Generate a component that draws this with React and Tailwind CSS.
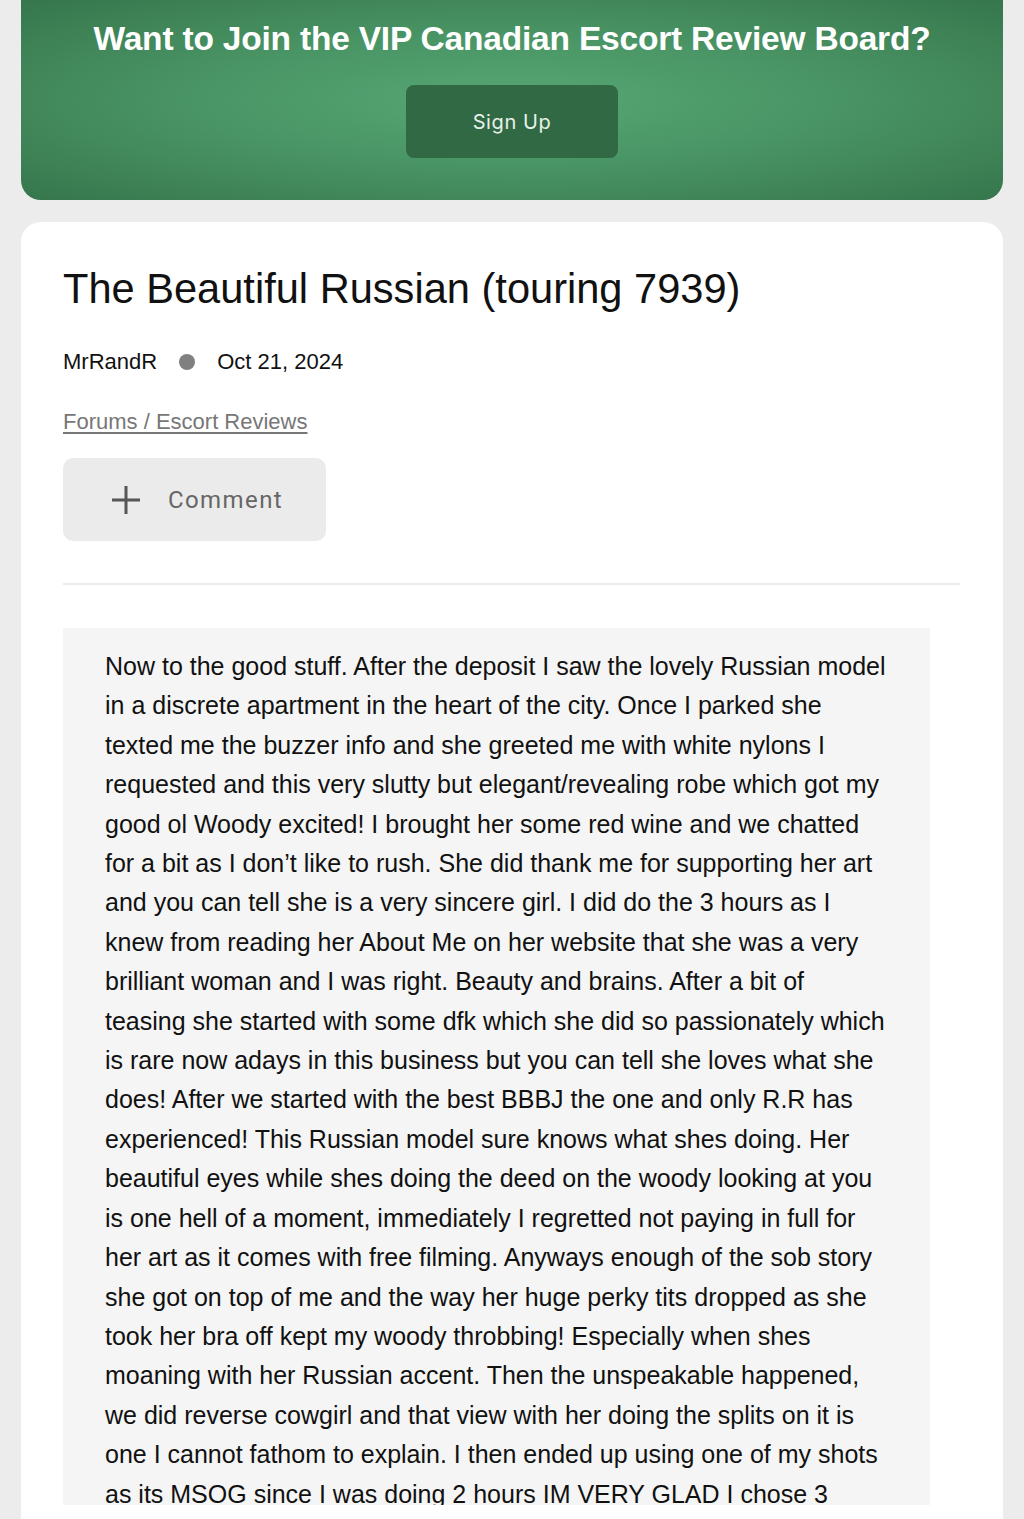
import React from 'react';

const lines = [
    "Now to the good stuff. After the deposit I saw the lovely Russian model",
    "in a discrete apartment in the heart of the city. Once I parked she",
    "texted me the buzzer info and she greeted me with white nylons I",
    "requested and this very slutty but elegant/revealing robe which got my",
    "good ol Woody excited! I brought her some red wine and we chatted",
    "for a bit as I don\u2019t like to rush. She did thank me for supporting her art",
    "and you can tell she is a very sincere girl. I did do the 3 hours as I",
    "knew from reading her About Me on her website that she was a very",
    "brilliant woman and I was right. Beauty and brains. After a bit of",
    "teasing she started with some dfk which she did so passionately which",
    "is rare now adays in this business but you can tell she loves what she",
    "does! After we started with the best BBBJ the one and only R.R has",
    "experienced! This Russian model sure knows what shes doing. Her",
    "beautiful eyes while shes doing the deed on the woody looking at you",
    "is one hell of a moment, immediately I regretted not paying in full for",
    "her art as it comes with free filming. Anyways enough of the sob story",
    "she got on top of me and the way her huge perky tits dropped as she",
    "took her bra off kept my woody throbbing! Especially when shes",
    "moaning with her Russian accent. Then the unspeakable happened,",
    "we did reverse cowgirl and that view with her doing the splits on it is",
    "one I cannot fathom to explain. I then ended up using one of my shots",
    "as its MSOG since I was doing 2 hours IM VERY GLAD I chose 3",
    "hours!",
];

const App = () => {
    return (
        <div className="h-[1519px] overflow-hidden bg-[#ececec] px-[21px] font-['Liberation_Sans',Arial,sans-serif]">
            <div className="h-[200px] rounded-b-[20px] bg-[radial-gradient(ellipse_at_center,#56a774_0%,#4a9565_45%,#36764c_100%)] flex flex-col items-center pt-[19px]">
                <h1 className="text-[33.5px] font-bold text-white leading-[40px] tracking-[-0.2px]">
                    Want to Join the VIP Canadian Escort Review Board?
                </h1>
                <button className="mt-[26px] w-[212px] h-[73px] rounded-[8px] bg-[#316945] text-[#e8f2ea] text-[20px] tracking-[0.6px] font-['Inter',sans-serif]">
                    Sign Up
                </button>
            </div>

            <div className="mt-[22px] bg-white rounded-t-[20px] px-[42px] pt-[42px] pb-[60px]">
                <h2 className="text-[41.6px] leading-[50px] text-[#111]">
                    The Beautiful Russian (touring 7939)
                </h2>
                <div className="mt-[34px] flex items-center gap-[22px] text-[22px] text-[#111] leading-[28px]">
                    <span>MrRandR</span>
                    <span className="w-[16px] h-[16px] rounded-full bg-[#808080]" />
                    <span>Oct 21, 2024</span>
                </div>
                <div className="mt-[32px] leading-[28px]">
                    <a href="#" className="text-[22px] text-[#777] underline underline-offset-[3px] decoration-[1.5px]">
                        Forums / Escort Reviews
                    </a>
                </div>
                <button className="mt-[20px] w-[263px] h-[83px] rounded-[10px] bg-[#ebebeb] flex items-center pl-[47px] gap-[26px] text-[#666] font-['Roboto',sans-serif]">
                    <svg width="32" height="32" viewBox="0 0 32 32" fill="none" stroke="#555" strokeWidth="3">
                        <path d="M16 2v28M2 16h28" />
                    </svg>
                    <span className="text-[24px] tracking-[1.4px]">Comment</span>
                </button>
                <div className="mt-[42px] mr-[1px] h-[2px] bg-[#ebebeb]" />
                <div className="mt-[43px] mr-[31px] h-[877px] overflow-hidden bg-[#f5f5f5] pl-[42px] pt-[19px]">
                    <p className="text-[25px] leading-[39.4px] text-[#111]">
                        {lines.map((l, i) => (
                            <span key={i} className="block whitespace-nowrap">{l}</span>
                        ))}
                    </p>
                </div>
            </div>
        </div>
    );
};

export default App;
